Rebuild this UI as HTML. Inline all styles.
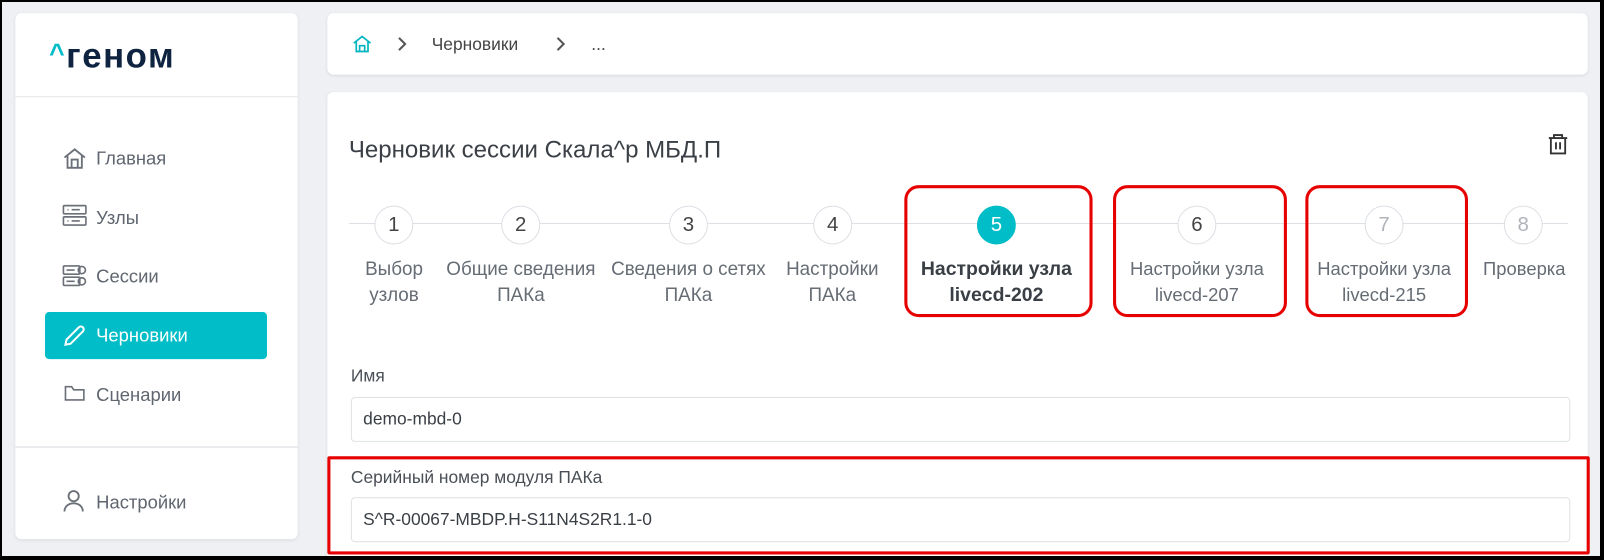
<!DOCTYPE html>
<html><head><meta charset="utf-8"><style>
*{box-sizing:border-box;margin:0;padding:0}
html,body{width:1604px;height:560px;overflow:hidden}
body{background:#000;font-family:"Liberation Sans",sans-serif;position:relative}
.bg{position:absolute;left:2px;top:2px;width:1598px;height:554px;background:#eef0f4;overflow:hidden}
.wrap{position:absolute;left:-2px;top:-2px;width:1568px;height:560px;transform:scale(1.023);transform-origin:0 0}
.card{position:absolute;background:#fff;border-radius:6px;box-shadow:0 1px 3px rgba(0,0,0,.08)}
.nav{position:absolute;left:94px;font-size:18px;color:#5f6670}
.ic{position:absolute;left:61px}
.step{position:absolute;top:201px;width:38px;height:38px;border:1px solid #dcdfe4;border-radius:50%;background:#fff;text-align:center;line-height:36px;font-size:20px;color:#444}
.lbl{position:absolute;top:251px;width:220px;text-align:center;font-size:19px;line-height:25px;color:#666c74;white-space:nowrap}
.lbl span{display:inline-block;transform:scaleX(.97)}
.red{position:absolute;border:3px solid #e60000;border-radius:14px}
.inp{position:absolute;left:343px;width:1192px;height:44px;border:1px solid #dfe2e6;border-radius:4px;font-size:17px;color:#3a3f45;padding-left:11px;line-height:42px}
.fl{position:absolute;left:343px;font-size:17px;color:#4a4f56}
</style></head><body><div class="bg"><div class="wrap">
<div class="card" style="left:15px;top:13px;width:276px;height:514px">
 <div style="position:absolute;left:33px;top:23px;font-size:34px;font-weight:bold;color:#0d2340;letter-spacing:1.5px"><span style="color:#00bcc6;font-size:26px;position:relative;top:-5px">^</span>геном</div>
 <div style="position:absolute;left:0;right:0;top:81px;border-top:1px solid #e3e5e8"></div>
 <div style="position:absolute;left:0;right:0;top:423px;border-top:2px solid #e9ebee"></div>
</div>
<div style="position:absolute;left:44px;top:305px;width:217px;height:46px;background:#00bdc7;border-radius:4px"></div>
<svg class="ic" style="top:143px" width="24" height="24" viewBox="0 0 24 24" fill="none" stroke="#6b7078" stroke-width="1.8"><path d="M2 11L12 3l10 8M5 9v12h14V9M9 21v-8h6v8"/></svg>
<div class="nav" style="top:145px">Главная</div>
<svg class="ic" style="top:199px" width="24" height="24" viewBox="0 0 24 24" fill="none" stroke="#6b7078" stroke-width="1.6"><rect x="1" y="2" width="22" height="8" rx="1"/><rect x="1" y="13" width="22" height="8" rx="1"/><path d="M5 6h1M9 6h8M5 17h1M9 17h8"/></svg>
<div class="nav" style="top:203px">Узлы</div>
<svg class="ic" style="top:258px" width="24" height="24" viewBox="0 0 24 24" fill="none" stroke="#6b7078" stroke-width="1.6"><rect x="1" y="2" width="16" height="8" rx="1"/><rect x="1" y="13" width="16" height="8" rx="1"/><circle cx="19" cy="6" r="3.5"/><circle cx="19" cy="17" r="3.5"/><path d="M4 6h8M4 17h8"/></svg>
<div class="nav" style="top:260px">Сессии</div>
<svg class="ic" style="top:316px" width="24" height="24" viewBox="0 0 24 24" fill="none" stroke="#fff" stroke-width="2"><path d="M3 21l1-5L16 4a2.8 2.8 0 014 4L8 20z"/></svg>
<div class="nav" style="top:318px;color:#fff">Черновики</div>
<svg class="ic" style="top:376px;left:63px" width="20" height="18" viewBox="0 0 20 18" fill="none" stroke="#6b7078" stroke-width="1.6"><path d="M1 3v12h18V5H9L7 2H1z"/></svg>
<div class="nav" style="top:376px">Сценарии</div>
<svg class="ic" style="top:479px;left:62px" width="20" height="22" viewBox="0 0 20 22" fill="none" stroke="#6b7078" stroke-width="1.8"><circle cx="10" cy="6" r="5"/><path d="M1 21c0-5 4-8 9-8s9 3 9 8"/></svg>
<div class="nav" style="top:481px">Настройки</div>

<div class="card" style="left:320px;top:13px;width:1232px;height:60px">
 <svg style="position:absolute;left:24px;top:21px" width="20" height="18" viewBox="0 0 24 22" fill="none" stroke="#00b5c0" stroke-width="2"><path d="M2 10L12 2l10 8M5 8v12h14V8M9 20v-7h6v7"/></svg>
 <svg style="position:absolute;left:68px;top:22px" width="10" height="16" viewBox="0 0 10 16" fill="none" stroke="#555" stroke-width="2"><path d="M2 2l6 6-6 6"/></svg>
 <div style="position:absolute;left:102px;top:21px;font-size:17px;color:#444">Черновики</div>
 <svg style="position:absolute;left:223px;top:22px" width="10" height="16" viewBox="0 0 10 16" fill="none" stroke="#555" stroke-width="2"><path d="M2 2l6 6-6 6"/></svg>
 <div style="position:absolute;left:258px;top:21px;font-size:17px;color:#444">...</div>
</div>
<div class="card" style="left:320px;top:90px;width:1232px;height:480px"></div>
<div style="position:absolute;left:341px;top:133px;font-size:23.5px;color:#3b4047">Черновик сессии Скала^р МБД.П</div>
<svg style="position:absolute;left:1513px;top:130px" width="20" height="22" viewBox="0 0 20 22" fill="none" stroke="#333" stroke-width="1.8"><path d="M1 5h18M6 5V2h8v3M3 5v15h14V5M8 9v7M12 9v7"/></svg>
<div style="position:absolute;left:341px;top:218px;width:1192px;border-top:1px solid #dde0e4"></div>
<div class="step" style="left:366px">1</div>
<div class="step" style="left:490px">2</div>
<div class="step" style="left:654px">3</div>
<div class="step" style="left:795px">4</div>
<div class="step" style="left:955px;background:#00bdc7;border-color:#00bdc7;color:#fff">5</div>
<div class="step" style="left:1151px">6</div>
<div class="step" style="left:1334px;color:#b0b4ba">7</div>
<div class="step" style="left:1470px;color:#b0b4ba">8</div>
<div class="lbl" style="left:275px"><span>Выбор<br>узлов</span></div>
<div class="lbl" style="left:399px"><span>Общие сведения<br>ПАКа</span></div>
<div class="lbl" style="left:563px"><span>Сведения о сетях<br>ПАКа</span></div>
<div class="lbl" style="left:704px"><span>Настройки<br>ПАКа</span></div>
<div class="lbl" style="left:864px;font-weight:bold;color:#3a3f45"><span style="transform:none">Настройки узла<br>livecd-202</span></div>
<div class="lbl" style="left:1060px"><span style="transform:none;font-size:18px">Настройки узла<br>livecd-207</span></div>
<div class="lbl" style="left:1243px"><span style="transform:none;font-size:18px">Настройки узла<br>livecd-215</span></div>
<div class="lbl" style="left:1380px"><span style="transform:none;font-size:18px">Проверка</span></div>
<div class="red" style="left:884px;top:181px;width:184px;height:129px"></div>
<div class="red" style="left:1088px;top:181px;width:170px;height:129px"></div>
<div class="red" style="left:1276px;top:181px;width:159px;height:129px"></div>
<div class="fl" style="top:358px">Имя</div>
<div class="inp" style="top:388px">demo-mbd-0</div>
<div class="fl" style="top:457px">Серийный номер модуля ПАКа</div>
<div class="inp" style="top:486px">S^R-00067-MBDP.H-S11N4S2R1.1-0</div>
<div style="position:absolute;left:320px;top:446px;width:1234px;height:96px;border:3px solid #e60000;border-radius:2px"></div>
</div></div></body></html>
